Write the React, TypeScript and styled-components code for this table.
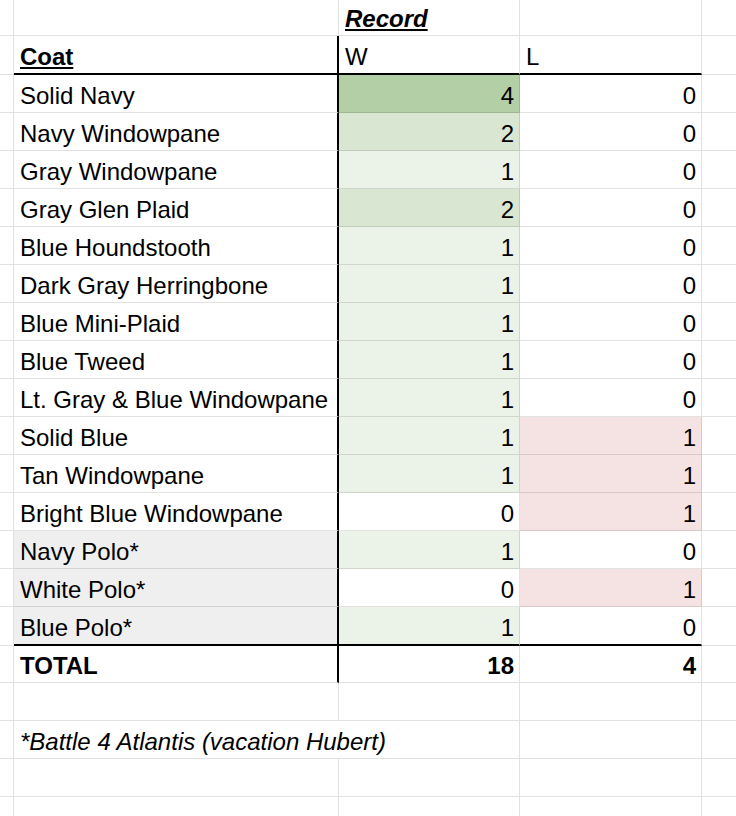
import React from "react";
import styled, { createGlobalStyle } from "styled-components";

const Global = createGlobalStyle`
  html, body { margin: 0; padding: 0; background: #fff; }
`;

const GRID = "rgba(0, 0, 0, 0.115)";

const Sheet = styled.div`
  width: 736px;
  height: 816px;
  overflow: hidden;
  display: flex;
  flex-direction: column;
  background: #fff;
  color: #000;
  font-family: "Liberation Sans", Arial, sans-serif;
  font-size: 24px;
`;

const Row = styled.div<{ $h: number }>`
  display: grid;
  grid-template-columns: 14px 325px 181px 182px 1fr;
  height: ${(p) => p.$h}px;
  flex: none;
`;

type CellProps = {
  $thickRight?: boolean;
  $thickBottom?: boolean;
  $bg?: string;
  $right?: boolean;
  $bold?: boolean;
  $italic?: boolean;
  $span?: number;
};

const Cell = styled.div<CellProps>`
  box-sizing: border-box;
  display: flex;
  align-items: flex-end;
  justify-content: ${(p) => (p.$right ? "flex-end" : "flex-start")};
  padding: 0 5px 3px ${(p) => (p.$right ? "5px" : "6px")};
  line-height: 26px;
  white-space: nowrap;
  min-width: 0;
  grid-column: span ${(p) => p.$span ?? 1};
  background: ${(p) => p.$bg ?? "#fff"};
  font-weight: ${(p) => (p.$bold ? 700 : 400)};
  font-style: ${(p) => (p.$italic ? "italic" : "normal")};
  border-right: ${(p) => (p.$thickRight ? "2px solid #000" : `1px solid ${GRID}`)};
  border-bottom: ${(p) => (p.$thickBottom ? "2px solid #000" : `1px solid ${GRID}`)};
`;

const Gutter = styled.div`
  box-sizing: border-box;
  border-right: 1px solid ${GRID};
  border-bottom: 1px solid ${GRID};
`;

const Edge = styled.div`
  box-sizing: border-box;
  border-bottom: 1px solid ${GRID};
`;

const Underlined = styled.span`
  text-decoration: underline;
  text-decoration-thickness: 2px;
  text-underline-offset: 2px;
`;

type Coat = { name: string; w: number; l: number; polo?: boolean };

const coats: Coat[] = [
  { name: "Solid Navy", w: 4, l: 0 },
  { name: "Navy Windowpane", w: 2, l: 0 },
  { name: "Gray Windowpane", w: 1, l: 0 },
  { name: "Gray Glen Plaid", w: 2, l: 0 },
  { name: "Blue Houndstooth", w: 1, l: 0 },
  { name: "Dark Gray Herringbone", w: 1, l: 0 },
  { name: "Blue Mini-Plaid", w: 1, l: 0 },
  { name: "Blue Tweed", w: 1, l: 0 },
  { name: "Lt. Gray & Blue Windowpane", w: 1, l: 0 },
  { name: "Solid Blue", w: 1, l: 1 },
  { name: "Tan Windowpane", w: 1, l: 1 },
  { name: "Bright Blue Windowpane", w: 0, l: 1 },
  { name: "Navy Polo*", w: 1, l: 0, polo: true },
  { name: "White Polo*", w: 0, l: 1, polo: true },
  { name: "Blue Polo*", w: 1, l: 0, polo: true },
];

const winColor: Record<number, string> = {
  0: "#ffffff",
  1: "#ebf2e7",
  2: "#d9e6d2",
  4: "#b3cfa5",
};
const lossColor = (n: number) => (n > 0 ? "#f4e3e2" : "#ffffff");

export default function App() {
  const totalW = coats.reduce((s, c) => s + c.w, 0);
  const totalL = coats.reduce((s, c) => s + c.l, 0);
  return (
    <>
      <Global />
      <Sheet>
        <Row $h={36}>
          <Gutter />
          <Cell />
          <Cell $bold $italic>
            <Underlined>Record</Underlined>
          </Cell>
          <Cell />
          <Edge />
        </Row>
        <Row $h={39}>
          <Gutter />
          <Cell $bold $thickRight $thickBottom>
            <Underlined>Coat</Underlined>
          </Cell>
          <Cell $thickBottom>W</Cell>
          <Cell $thickBottom>L</Cell>
          <Edge />
        </Row>
        {coats.map((c, i) => {
          const last = i === coats.length - 1;
          return (
            <Row key={c.name} $h={last ? 39 : 38}>
              <Gutter />
              <Cell $thickRight $thickBottom={last} $bg={c.polo ? "#efefef" : undefined}>
                {c.name}
              </Cell>
              <Cell $right $thickBottom={last} $bg={winColor[c.w]}>
                {c.w}
              </Cell>
              <Cell $right $thickBottom={last} $bg={lossColor(c.l)}>
                {c.l}
              </Cell>
              <Edge />
            </Row>
          );
        })}
        <Row $h={37}>
          <Gutter />
          <Cell $bold $thickRight>
            TOTAL
          </Cell>
          <Cell $bold $right>
            {totalW}
          </Cell>
          <Cell $bold $right>
            {totalL}
          </Cell>
          <Edge />
        </Row>
        <Row $h={38}>
          <Gutter />
          <Cell />
          <Cell />
          <Cell />
          <Edge />
        </Row>
        <Row $h={38}>
          <Gutter />
          <Cell $italic $span={2}>
            *Battle 4 Atlantis (vacation Hubert)
          </Cell>
          <Cell />
          <Edge />
        </Row>
        <Row $h={38}>
          <Gutter />
          <Cell />
          <Cell />
          <Cell />
          <Edge />
        </Row>
        <Row $h={38}>
          <Gutter />
          <Cell />
          <Cell />
          <Cell />
          <Edge />
        </Row>
      </Sheet>
    </>
  );
}
